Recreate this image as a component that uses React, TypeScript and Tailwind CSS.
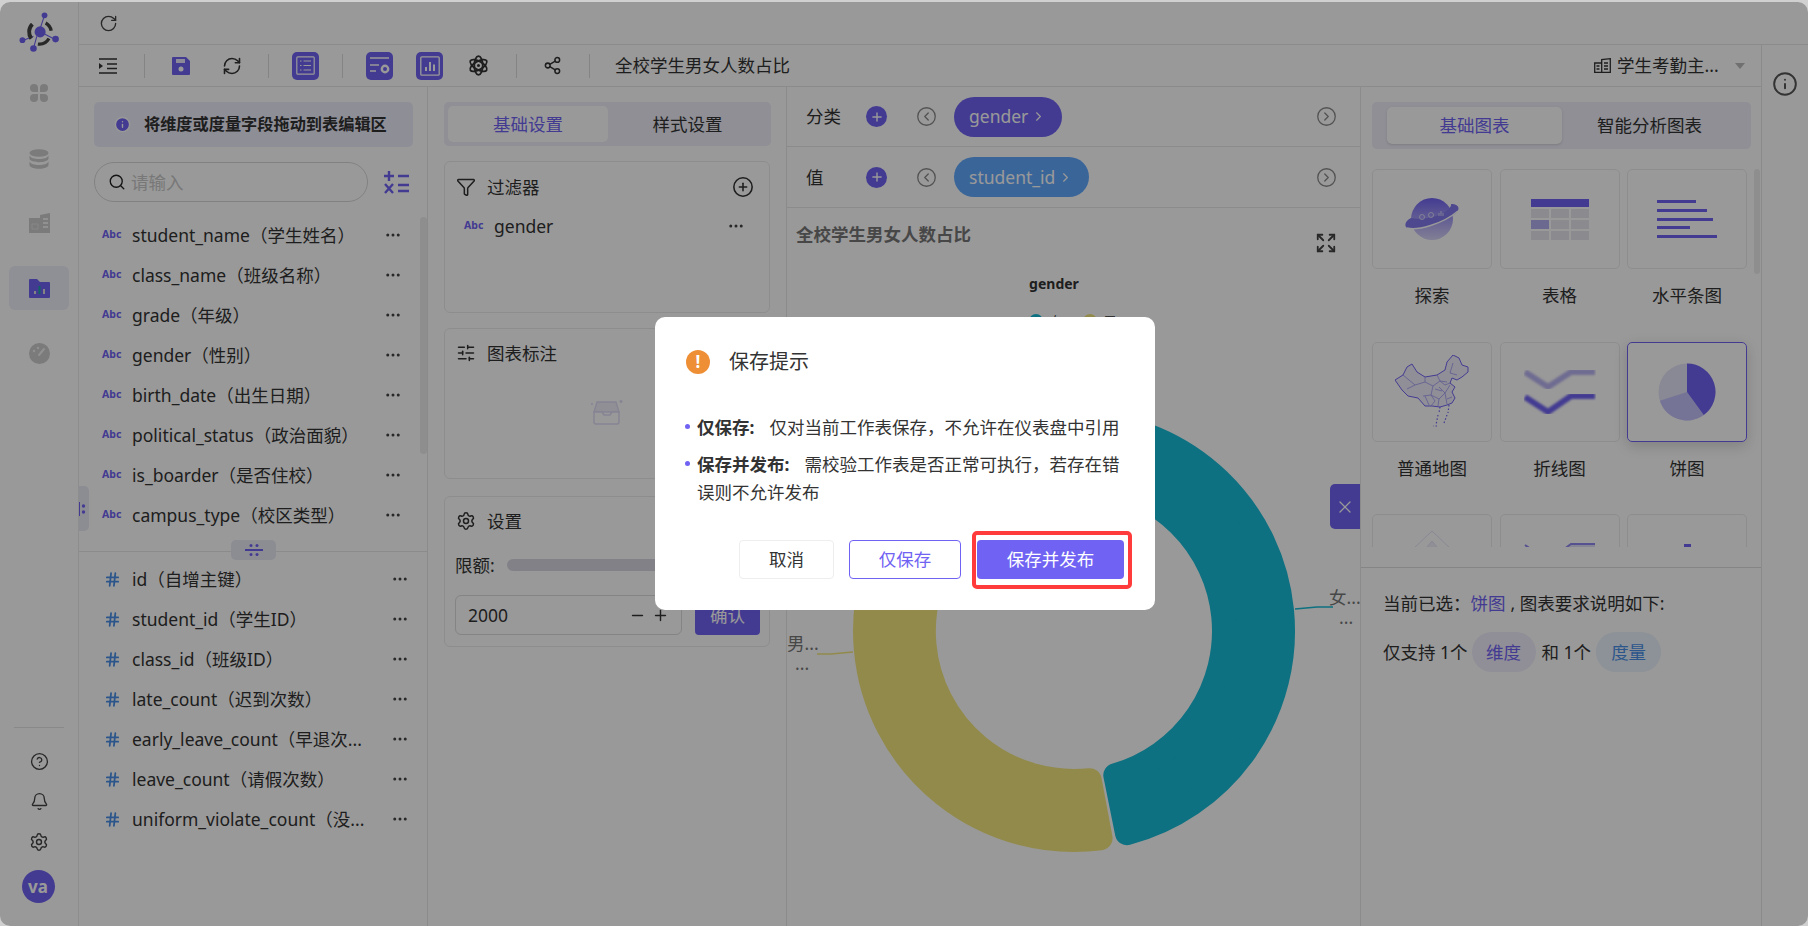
import {
  Bell,
  CircleChevronLeft,
  CircleChevronRight,
  CircleHelp,
  CirclePlus,
  ChevronRight,
  Ellipsis,
  Expand,
  Funnel,
  Hash,
  Info,
  Minus,
  Plus,
  RefreshCw,
  RotateCw,
  Search,
  Settings,
  Share2,
  SlidersHorizontal,
  X,
} from "lucide-react";

const dimensions = [
  "student_name（学生姓名）",
  "class_name（班级名称）",
  "grade（年级）",
  "gender（性别）",
  "birth_date（出生日期）",
  "political_status（政治面貌）",
  "is_boarder（是否住校）",
  "campus_type（校区类型）",
];

const measures = [
  "id（自增主键）",
  "student_id（学生ID）",
  "class_id（班级ID）",
  "late_count（迟到次数）",
  "early_leave_count（早退次...",
  "leave_count（请假次数）",
  "uniform_violate_count（没...",
];

function sector(a0: number, a1: number, rO: number, rI: number, d: number) {
  const pt = (deg: number, r: number) => {
    const rad = (deg * Math.PI) / 180;
    return `${(287 + r * Math.sin(rad)).toFixed(2)} ${(423 - r * Math.cos(rad)).toFixed(2)}`;
  };
  const off = (r: number) => ((d / r) * 180) / Math.PI;
  const large = a1 - a0 > 180 ? 1 : 0;
  return `M${pt(a0 + off(rO), rO)} A${rO} ${rO} 0 ${large} 1 ${pt(a1 - off(rO), rO)} L${pt(a1 - off(rI), rI)} A${rI} ${rI} 0 ${large} 0 ${pt(a0 + off(rI), rI)} Z`;
}

function Sep() {
  return <div className="h-[24px] w-px bg-[#dcdcdc]" />;
}

function Abc() {
  return <span className="mt-[-2px] w-[30px] shrink-0 text-[10.500px] leading-none font-bold text-[#7063f3]">Abc</span>;
}

function Logo() {
  return (
    <svg width="42" height="42" viewBox="0 0 38 38">
      <path d="M24 3 L20 15 M4 26 L14 22 M14 33 L17 22 M34 25 L24 20" stroke="#7063f3" strokeWidth="1" />
      <path d="M12 24 A10 10 0 0 1 13 11" fill="none" stroke="#444" strokeWidth="3.5" />
      <path d="M25 10 A10 10 0 0 1 30 17" fill="none" stroke="#444" strokeWidth="3" />
      <path d="M18 29 A10 10 0 0 0 28 24" fill="none" stroke="#444" strokeWidth="3" />
      <circle cx="20" cy="18" r="5" fill="#7063f3" />
      <circle cx="24" cy="3" r="2.6" fill="#7063f3" />
      <circle cx="4" cy="25.5" r="2.6" fill="#7063f3" />
      <circle cx="14" cy="33" r="3" fill="#7063f3" />
      <circle cx="34" cy="24.5" r="3" fill="#7063f3" />
    </svg>
  );
}

function Petals() {
  return (
    <svg width="20" height="20" viewBox="0 0 20 20" fill="#cdcdcd">
      <path d="M9 9H5a4 4 0 1 1 4-4z" />
      <path d="M11 9h4a4 4 0 1 0-4-4z" />
      <path d="M9 11H5a4 4 0 1 0 4 4z" />
      <path d="M11 11h4a4 4 0 1 1-4 4z" />
    </svg>
  );
}

function Db() {
  return (
    <svg width="20" height="20" viewBox="0 0 20 20" fill="#cdcdcd">
      <ellipse cx="10" cy="4" rx="9.5" ry="3.8" />
      <path d="M.5 6.5c1 2.5 5 3.5 9.5 3.5s8.500-1 9.500-3.500V9.500c0 2-4 3.700-9.500 3.700S.5 11.500.5 9.500z" />
      <path d="M.5 12.500c1 2.500 5 3.500 9.500 3.500s8.500-1 9.500-3.500V16c0 2-4 3.800-9.500 3.800S.5 18 .5 16z" />
    </svg>
  );
}

function Building() {
  return (
    <svg width="21" height="20" viewBox="0 0 21 20">
      <path d="M0 5h11V2l10-2v20H0z" fill="#cdcdcd" />
      <path d="M3 11h6v5H3z" fill="none" stroke="#e2e2e2" strokeWidth="1" />
      <path d="M14 6h5M14 10h5M14 14h5" fill="none" stroke="#f2f2f2" strokeWidth="2" />
    </svg>
  );
}

function FolderChart() {
  return (
    <svg width="21" height="19" viewBox="0 0 21 19">
      <path d="M0 1a1 1 0 0 1 1-1h7l3 3h9a1 1 0 0 1 1 1v14a1 1 0 0 1-1 1H1a1 1 0 0 1-1-1z" fill="#7063f3" />
      <path d="M5 12h2v3H5z" fill="#ddd" />
      <path d="M9.500 7h2v8h-2z" fill="#1aa6a6" />
      <path d="M14 10h2v5h-2z" fill="#ddd" />
    </svg>
  );
}

function Gauge() {
  return (
    <svg width="21" height="21" viewBox="0 0 21 21">
      <circle cx="10.500" cy="10.500" r="10.500" fill="#cdcdcd" />
      <path d="M10 12l5-6" stroke="#f2f2f2" strokeWidth="2" strokeLinecap="round" />
      <circle cx="5" cy="8" r="1.200" fill="#f2f2f2" />
      <circle cx="9" cy="5" r="1.200" fill="#f2f2f2" />
    </svg>
  );
}

function AtomIcon() {
  return (
    <svg width="21" height="21" viewBox="0 0 21 21" fill="none" stroke="#333" strokeWidth="1.800">
      <ellipse cx="10.500" cy="10.500" rx="4.200" ry="9.400" />
      <ellipse cx="10.500" cy="10.500" rx="4.200" ry="9.400" transform="rotate(60 10.500 10.500)" />
      <ellipse cx="10.500" cy="10.500" rx="4.200" ry="9.400" transform="rotate(120 10.500 10.500)" />
      <circle cx="10.500" cy="10.500" r="1.500" fill="#333" stroke="none" />
    </svg>
  );
}

function TileList() {
  return (
    <svg width="19" height="19" viewBox="0 0 19 19" fill="none" stroke="#fff" strokeWidth="1.200">
      <rect x=".8" y=".8" width="17.400" height="17.400" rx="1" />
      <path d="M4 5h1.500M7.500 5H15M4 9.500h1.500M7.500 9.500H15M4 14h1.500M7.500 14H15" />
    </svg>
  );
}

function TileSettings() {
  return (
    <svg width="22" height="20" viewBox="0 0 22 20" fill="none" stroke="#fff" strokeWidth="1.600">
      <path d="M1 2h19M1 9h9M1 15h6" />
      <circle cx="16" cy="13" r="3.200" strokeWidth="2.400" />
    </svg>
  );
}

function TileChart() {
  return (
    <svg width="20" height="20" viewBox="0 0 20 20" fill="none" stroke="#fff" strokeWidth="1.300">
      <rect x=".8" y=".8" width="18.400" height="18.400" rx="1" />
      <path d="M6 15v-4M10 15V6M14 15V8.500" strokeWidth="2" />
    </svg>
  );
}

function MathIcon() {
  return (
    <svg width="25" height="24" viewBox="0 0 25 24" fill="none" stroke="#7063f3" strokeWidth="2.400">
      <path d="M0 6h10M5 1v10M14 6h11M1 14l8 9M9 14l-8 9M14 15h11M14 21h11" />
    </svg>
  );
}

function Inbox() {
  return (
    <svg width="32" height="27" viewBox="0 0 32 27" fill="none" stroke="#dedcf6" strokeWidth="1.400">
      <path d="M6 3h19l3 10H3z" fill="#f0effb" />
      <path d="M3 13h8l2 3h6l2-3h7v10a2 2 0 0 1-2 2H5a2 2 0 0 1-2-2z" fill="#fff" />
      <path d="M30 1v3M28.500 2.500h3M0 5h2" />
    </svg>
  );
}

function Planet() {
  return (
    <svg width="54" height="42" viewBox="0 0 54 42">
      <defs>
        <linearGradient id="planet" x1="0" y1="0" x2="0" y2="1">
          <stop offset="0" stopColor="#7063f3" />
          <stop offset="1" stopColor="#d8d5f8" />
        </linearGradient>
      </defs>
      <circle cx="27" cy="21" r="21" fill="url(#planet)" />
      <path d="M6 20 C-2 24 -1 31 6 31 C20 31 40 24 50 16 C56 11 54 6 46 6 C48 12 26 24 6 20Z" fill="#8379ee" />
      <path d="M2 30 C12 33 38 26 53 13" fill="none" stroke="#fff" strokeWidth="1.500" />
      <g fill="none" stroke="#e8e6fb" strokeWidth=".8">
        <circle cx="17" cy="19" r="2.500" />
        <circle cx="26" cy="17" r="2.500" />
        <path d="M34 18v-3M36 18v-5M38 18v-3" />
      </g>
    </svg>
  );
}

function TableIcon() {
  const cells = [0, 1, 2, 3, 4, 5, 6, 7, 8];
  return (
    <div className="flex w-[58px] flex-col gap-[2px]">
      <div className="h-[8px] bg-[#7063f3]" />
      <div className="grid grid-cols-3 gap-[2px]">
        {cells.map((c) => (
          <div key={c} className={c === 3 ? "h-[9px] bg-[#b5b0f0]" : "h-[9px] bg-[#e6e6ee]"} />
        ))}
      </div>
    </div>
  );
}

function BarsIcon() {
  return (
    <div className="flex w-[60px] flex-col gap-[5.600px]">
      <div className="h-[3px] w-[39px] bg-[#7063f3]" />
      <div className="h-[3px] w-[50px] bg-[#7063f3]" />
      <div className="h-[3px] w-[56px] bg-[#7063f3]" />
      <div className="h-[3px] w-[33px] bg-[#7063f3]" />
      <div className="h-[3px] w-[60px] bg-[#7063f3]" />
    </div>
  );
}

function MapIcon() {
  return (
    <svg width="74" height="73" viewBox="0 0 74 73" fill="none" stroke="#7063f3">
      <path
        d="M58 0L64 3 67 10 73 12 73 17 67 22 62 25 57 23 55 28 60 32 57 37 60 43 57 48 52 50 45 52 37 51 30 51 23 43 13 41 7 35 0 25 8 20 12 12 17 9 22 17 30 22 42 20 50 15 52 7Z"
        fill="#f0effc"
        strokeWidth="1"
      />
      <path
        d="M20 30L30 27 38 31 36 40 28 41M38 31L45 26 52 27M36 40L44 44 50 38 55 30M44 44L43 51M30 41L34 50M50 38L52 49M58 8L55 18 62 20M8 20L20 30 12 34M30 27L30 22M42 20L45 26 50 30 55 28M36 40L40 46 36 51M44 32L50 38M40 34L47 36M52 44L57 42"
        stroke="#9d97f2"
        strokeWidth=".8"
      />
      <path d="M45 52L44 58M54 50L53 58M43 60L41 70M52 60L49 68M42 71h-4" strokeWidth="1.200" strokeDasharray="1.500 2" />
    </svg>
  );
}

function LineIcon() {
  return (
    <svg width="72" height="46" viewBox="0 0 72 46" fill="none">
      <defs>
        <filter id="soft">
          <feGaussianBlur stdDeviation=".8" />
        </filter>
      </defs>
      <path d="M1 3L24 18 47 3H71" stroke="#b9b4f3" strokeWidth="6" filter="url(#soft)" />
      <path d="M1 28L24 43 47 27H71" stroke="#7063f3" strokeWidth="6" filter="url(#soft)" />
    </svg>
  );
}

function PieIcon() {
  return (
    <svg width="58" height="58" viewBox="0 0 58 58">
      <circle cx="29" cy="29" r="28.500" fill="#e4e3f8" />
      <path d="M29 29L45.750 52.060A28.500 28.500 0 0 1 1.900 37.800Z" fill="#c3c1fb" />
      <path d="M29 .5A28.500 28.500 0 0 1 45.750 52.060L29 29Z" fill="#7063f3" />
    </svg>
  );
}

const charts = [
  { id: "explore", name: "探索", icon: <Planet /> },
  { id: "table", name: "表格", icon: <TableIcon /> },
  { id: "hbar", name: "水平条图", icon: <BarsIcon /> },
  { id: "map", name: "普通地图", icon: <MapIcon /> },
  { id: "line", name: "折线图", icon: <LineIcon /> },
  { id: "pie", name: "饼图", icon: <PieIcon />, active: true },
  {
    id: "radar",
    icon: (
      <svg width="50" height="68" viewBox="0 0 50 68" fill="none" stroke="#e4e2f6">
        <path d="M25 1L45 20 37 44H13L5 20Z" />
        <path d="M25 11L36 24 25 38 14 24Z" fill="#f0effb" />
      </svg>
    ),
  },
  {
    id: "area",
    icon: (
      <svg width="72" height="46" viewBox="0 0 72 46" fill="none">
        <path d="M1 4L24 20 47 3H71V30H1Z" fill="#e0defa" />
        <path d="M1 4L24 20 47 3H71" stroke="#9088ee" strokeWidth="2" />
      </svg>
    ),
  },
  {
    id: "bar",
    icon: (
      <div className="flex h-[40px] items-start justify-center">
        <div className="h-[30px] w-[7px] bg-[#7063f3]" />
      </div>
    ),
  },
];

export default function App() {
  return (
    <div className="relative h-screen w-screen overflow-hidden bg-[#d0d0d0] pt-[2px] font-['Noto_Sans','Noto_Sans_CJK_SC',sans-serif] text-[17.5px] text-[#333]">
      <div className="relative flex h-full overflow-hidden rounded-[10px] bg-white">
        {/* rail */}
        <aside className="flex w-[79px] shrink-0 flex-col items-center border-r border-[#ececec]">
          <div className="mt-[11px] flex h-[40px] items-center justify-center">
            <Logo />
          </div>
          <div className="mt-[30px] flex h-[20px] items-center"><Petals /></div>
          <div className="mt-[46px] flex h-[20px] items-center"><Db /></div>
          <div className="mt-[44px] flex h-[20px] items-center"><Building /></div>
          <div className="mt-[33px] flex h-[44px] w-[60px] items-center justify-center rounded-[6px] bg-[#eeeefb]">
            <FolderChart />
          </div>
          <div className="mt-[33px] flex h-[21px] items-center"><Gauge /></div>
          <div className="mt-auto w-[50px] border-t border-[#e4e4e4]" />
          <CircleHelp size={19} strokeWidth={1.700} className="mt-[24px] text-[#444]" />
          <Bell size={19} strokeWidth={1.700} className="mt-[21px] text-[#444]" />
          <Settings size={20} strokeWidth={1.700} className="mt-[21px] text-[#444]" />
          <div className="mt-[18px] mb-[23px] flex h-[33px] w-[33px] -translate-x-px items-center justify-center rounded-full bg-[#7063f3] text-[17px] leading-none font-bold text-white">
            va
          </div>
        </aside>

        <div className="flex min-w-0 flex-1 flex-col">
          <div className="flex h-[43px] shrink-0 items-center border-b border-[#e8e8e8] pl-[20px]">
            <RotateCw size={19} strokeWidth={1.700} className="text-[#444]" />
          </div>

          <div className="flex min-h-0 flex-1">
            <div className="flex w-[1682px] flex-col">
              {/* toolbar */}
              <div className="flex h-[42px] shrink-0 items-center border-b border-[#e8e8e8] pl-[20px]">
                <svg width="18" height="16" viewBox="0 0 18 16" stroke="#333" strokeWidth="1.700">
                  <path d="M0 1h18M8 6h10M8 10.500h10M0 15h18" />
                  <path d="M0 5l4 3-4 3z" fill="#333" stroke="none" />
                </svg>
                <div className="ml-[27px]"><Sep /></div>
                <svg className="ml-[27px]" width="18" height="18" viewBox="0 0 18 18">
                  <path d="M1 0h13l4 4v13a1 1 0 0 1-1 1H1a1 1 0 0 1-1-1V1a1 1 0 0 1 1-1z" fill="#7063f3" />
                  <rect x="4" y="2" width="9" height="4" fill="#e8e6fb" />
                  <circle cx="9" cy="12" r="2.500" fill="#fff" />
                </svg>
                <RefreshCw size={20} strokeWidth={1.900} className="ml-[32px] text-[#333]" />
                <div className="ml-[26px]"><Sep /></div>
                <div className="ml-[23px] flex h-[28px] w-[27px] items-center justify-center rounded-[5px] bg-[#7063f3]"><TileList /></div>
                <div className="ml-[23px]"><Sep /></div>
                <div className="ml-[23px] flex h-[28px] w-[27px] items-center justify-center rounded-[5px] bg-[#7063f3]"><TileSettings /></div>
                <div className="ml-[23px] flex h-[28px] w-[27px] items-center justify-center rounded-[5px] bg-[#7063f3]"><TileChart /></div>
                <div className="ml-[25px]"><AtomIcon /></div>
                <div className="ml-[27px]"><Sep /></div>
                <Share2 size={19} strokeWidth={1.900} className="ml-[26px] text-[#333]" />
                <div className="ml-[27px]"><Sep /></div>
                <span className="ml-[25px]">全校学生男女人数占比</span>
                <div className="ml-auto flex items-center pr-[16px]">
                  <svg width="17" height="15" viewBox="0 0 17 15" fill="none" stroke="#333" strokeWidth="1.300">
                    <path d="M.7 5h7v9.300h-7zM7.700 14.300V1.700l8.600-1v13.600zM2.500 8h3M2.500 11h3M10 5h4M10 8h4M10 11h4" />
                  </svg>
                  <span className="ml-[6px] w-[103px]">学生考勤主...</span>
                  <span className="ml-[15px] h-0 w-0 border-x-[5px] border-t-[6px] border-x-transparent border-t-[#bbb]" />
                </div>
              </div>

              <div className="flex min-h-0 flex-1">
                {/* fields */}
                <section className="relative flex w-[349px] shrink-0 flex-col border-r border-[#e8e8e8]">
                  <div className="mx-[15px] mt-[15px] flex h-[45px] w-[319px] items-center rounded-[5px] bg-[#ededfb] pl-[20px]">
                    <Info size={17} fill="#7063f3" stroke="#fff" strokeWidth={2} />
                    <span className="ml-[13px] text-[16.200px] font-semibold">将维度或度量字段拖动到表编辑区</span>
                  </div>
                  <div className="mx-[15px] mt-[15px] flex items-center">
                    <div className="flex h-[40px] w-[274px] items-center rounded-full border border-[#d8d8d8] pl-[13px]">
                      <Search size={18} strokeWidth={1.800} className="text-[#222]" />
                      <span className="ml-[5px] text-[#c8c8c8]">请输入</span>
                    </div>
                    <div className="ml-[16px]"><MathIcon /></div>
                  </div>
                  <div className="mt-[13px] flex flex-col">
                    {dimensions.map((d) => (
                      <div key={d} className="flex h-[40px] items-center pr-[25px] pl-[23px]">
                        <Abc />
                        <span className="flex-1 truncate">{d}</span>
                        <Ellipsis size={18} strokeWidth={2} className="text-[#444]" />
                      </div>
                    ))}
                  </div>
                  <div className="mt-[16px] border-t border-[#e8e8e8]" />
                  <div className="mt-[7px] flex flex-col">
                    {measures.map((m) => (
                      <div key={m} className="flex h-[40px] items-center pr-[18px] pl-[25px]">
                        <Hash size={17} strokeWidth={2.500} className="mr-[11px] shrink-0 text-[#4a90e8]" />
                        <span className="flex-1 truncate">{m}</span>
                        <Ellipsis size={18} strokeWidth={2} className="text-[#444]" />
                      </div>
                    ))}
                  </div>
                  <div className="absolute top-[130px] right-0 h-[237px] w-[7px] rounded-full bg-[#ededed]" />
                  <div className="absolute top-[453px] left-[152px] flex h-[20px] w-[45px] items-center justify-center rounded-[5px] bg-[#e9e9f6]">
                    <svg width="18" height="12" viewBox="0 0 18 12" fill="#7063f3">
                      <rect x="0" y="5" width="18" height="2" />
                      <circle cx="6" cy="1.500" r="1.500" />
                      <circle cx="12" cy="1.500" r="1.500" />
                      <circle cx="6" cy="10.500" r="1.500" />
                      <circle cx="12" cy="10.500" r="1.500" />
                    </svg>
                  </div>
                  <div className="absolute top-[399px] left-0 flex h-[45px] w-[10px] items-center rounded-r-[5px] bg-[#e9e9f6]">
                    <svg width="7" height="14" viewBox="0 0 7 14" fill="#7063f3">
                      <rect x="0" y="0" width="1" height="14" />
                      <circle cx="4.500" cy="4" r="1.700" />
                      <circle cx="4.500" cy="10" r="1.700" />
                    </svg>
                  </div>
                </section>

                {/* settings */}
                <section className="flex w-[359px] shrink-0 flex-col border-r border-[#e8e8e8] px-[16px]">
                  <div className="mt-[15px] flex h-[44px] w-[327px] items-center rounded-[5px] bg-[#eeeef8] p-[4px]">
                    <div className="flex h-[36px] w-[160px] items-center justify-center rounded-[5px] bg-white text-[#7063f3]">基础设置</div>
                    <div className="flex flex-1 items-center justify-center">样式设置</div>
                  </div>

                  <div className="mt-[15px] h-[152px] w-[326px] rounded-[6px] border border-[#ececec]">
                    <div className="flex items-center pt-[14px] pr-[15px] pl-[11px]">
                      <Funnel size={20} strokeWidth={1.800} className="text-[#333]" />
                      <span className="ml-[11px] leading-[22px]">过滤器</span>
                      <CirclePlus size={22} strokeWidth={1.700} className="ml-auto text-[#333]" />
                    </div>
                    <div className="mt-[17px] flex items-center pr-[24px] pl-[19px]">
                      <Abc />
                      <span className="flex-1 leading-[22px]">gender</span>
                      <Ellipsis size={18} strokeWidth={2} className="text-[#444]" />
                    </div>
                  </div>

                  <div className="mt-[15px] h-[151px] w-[326px] rounded-[6px] border border-[#ececec]">
                    <div className="flex items-center pt-[13px] pl-[11px]">
                      <SlidersHorizontal size={20} strokeWidth={1.800} className="text-[#333]" />
                      <span className="ml-[11px] leading-[22px]">图表标注</span>
                    </div>
                    <div className="mt-[35px] flex justify-center">
                      <Inbox />
                    </div>
                  </div>

                  <div className="mt-[17px] h-[151px] w-[326px] rounded-[6px] border border-[#ececec] pl-[10px]">
                    <div className="flex items-center pt-[13px] pl-[1px]">
                      <Settings size={20} strokeWidth={1.800} className="text-[#333]" />
                      <span className="ml-[11px] leading-[22px]">设置</span>
                    </div>
                    <div className="mt-[22px] flex items-center">
                      <span className="w-[52px] leading-[22px]">限额:</span>
                      <div className="h-[12px] w-[253px] rounded-full bg-[#d8d8e2]" />
                    </div>
                    <div className="mt-[19px] flex items-center">
                      <div className="flex h-[40px] w-[227px] items-center rounded-[6px] border border-[#dcdcdc] pl-[12px]">
                        <span className="flex-1">2000</span>
                        <Minus size={17} className="mr-[6px] text-[#333]" />
                        <Plus size={17} className="mr-[12px] text-[#333]" />
                      </div>
                      <div className="ml-[13px] flex h-[40px] w-[65px] items-center justify-center rounded-[4px] bg-[#7063f3] text-white">确认</div>
                    </div>
                  </div>
                </section>

                {/* chart */}
                <section className="flex w-[574px] shrink-0 flex-col border-r border-[#e8e8e8]">
                  <div className="flex h-[60px] shrink-0 items-center border-b border-[#e8e8e8] pr-[23px] pl-[19px]">
                    <span className="w-[60px]">分类</span>
                    <div className="flex h-[21px] w-[21px] items-center justify-center rounded-full bg-[#7063f3]">
                      <Plus size={14} strokeWidth={2.400} className="text-white" />
                    </div>
                    <CircleChevronLeft size={21} strokeWidth={1.500} className="ml-[29px] text-[#8a8a8a]" />
                    <div className="ml-[17px] flex h-[40px] items-center rounded-full bg-[#7063f3] pr-[16px] pl-[15px] text-[#fff]">
                      gender
                      <ChevronRight size={15} strokeWidth={1.800} className="ml-[3px]" />
                    </div>
                    <CircleChevronRight size={21} strokeWidth={1.500} className="ml-auto text-[#8a8a8a]" />
                  </div>
                  <div className="flex h-[61px] shrink-0 items-center border-b border-[#e8e8e8] pr-[23px] pl-[19px]">
                    <span className="w-[60px]">值</span>
                    <div className="flex h-[21px] w-[21px] items-center justify-center rounded-full bg-[#7063f3]">
                      <Plus size={14} strokeWidth={2.400} className="text-white" />
                    </div>
                    <CircleChevronLeft size={21} strokeWidth={1.500} className="ml-[29px] text-[#8a8a8a]" />
                    <div className="ml-[17px] flex h-[40px] items-center rounded-full bg-[#61a9ff] pr-[16px] pl-[15px] text-white">
                      student_id
                      <ChevronRight size={15} strokeWidth={1.800} className="ml-[3px]" />
                    </div>
                    <CircleChevronRight size={21} strokeWidth={1.500} className="ml-auto text-[#8a8a8a]" />
                  </div>
                  <div className="relative min-h-0 flex-1">
                    <svg width="573" height="718" viewBox="0 0 573 718" className="absolute inset-0">
                      <text x="267" y="81" textAnchor="middle" fontSize="14" fontWeight="700" fill="#333">gender</text>
                      <circle cx="249" cy="113" r="7" fill="#17bcd7" />
                      <text x="262" y="119" fontSize="14" fill="#555">女</text>
                      <circle cx="303" cy="113" r="7" fill="#f4e77e" />
                      <text x="316" y="119" fontSize="14" fill="#555">男</text>
                      <path d={sector(0, 168.600, 209, 150, 12)} fill="#17bcd7" stroke="#17bcd7" strokeWidth="24" strokeLinejoin="round" />
                      <path d={sector(169.400, 360, 209, 150, 12)} fill="#f4e77e" stroke="#f4e77e" strokeWidth="24" strokeLinejoin="round" />
                      <path d="M508 401L530 399H546" fill="none" stroke="#17bcd7" strokeWidth="1.500" />
                      <path d="M66 444L44 446H30" fill="none" stroke="#f4e77e" strokeWidth="1.500" />
                      <text x="542" y="396" fontSize="17.500" fill="#777">女...</text>
                      <text x="552" y="416" fontSize="17.500" fill="#777">...</text>
                      <text x="0" y="442" fontSize="17.500" fill="#777">男...</text>
                      <text x="8" y="462" fontSize="17.500" fill="#777">...</text>
                    </svg>
                    <div className="relative flex items-start justify-between pt-[13px] pr-[23px] pl-[9px]">
                      <span className="font-bold text-[#777]">全校学生男女人数占比</span>
                      <Expand size={22} strokeWidth={2} className="mt-[11px] text-[#444]" />
                    </div>
                    <div className="absolute top-[276px] right-0 flex h-[45px] w-[30px] items-center justify-center rounded-l-[5px] bg-[#7063f3]">
                      <X size={20} strokeWidth={1.500} className="text-white" />
                    </div>
                  </div>
                </section>

                {/* chart types */}
                <section className="relative flex w-[400px] shrink-0 flex-col">
                  <div className="mx-[11px] mt-[15px] flex h-[47px] w-[379px] items-center rounded-[5px] bg-[#eeeef8] pr-[14px] pl-[15px]">
                    <div className="flex h-[37px] w-[175px] items-center justify-center rounded-[5px] bg-white text-[#7063f3] shadow-sm">基础图表</div>
                    <div className="flex flex-1 items-center justify-center">智能分析图表</div>
                  </div>
                  <div className="mt-[20px] ml-[11px] grid h-[378px] grid-cols-[120px_120px_120px] gap-x-[7.500px] overflow-hidden">
                    {charts.map((c) => (
                      <div key={c.id} className="h-[172.500px]">
                        <div
                          className={
                            c.active
                              ? "flex h-[100px] items-center justify-center overflow-hidden rounded-[5px] border border-[#7063f3] shadow-[0_4px_14px_rgba(0,0,0,0.16)]"
                              : "flex h-[100px] items-center justify-center overflow-hidden rounded-[5px] border border-[#ececec]"
                          }
                        >
                          {c.icon}
                        </div>
                        {c.name && <div className="mt-[14px] text-center leading-[24px]">{c.name}</div>}
                      </div>
                    ))}
                  </div>
                  <div className="absolute top-[82px] right-[1px] h-[105px] w-[6px] rounded-full bg-[#ededed]" />
                  <div className="mt-[20px] border-t border-[#dedede] pt-[23px] pl-[22px]">
                    <div className="flex items-center leading-[24px]">
                      当前已选：<span className="text-[#7063f3]">饼图</span>
                      <span className="ml-[5px]">, 图表要求说明如下:</span>
                    </div>
                    <div className="mt-[17px] flex items-center">
                      <span>仅支持 1个</span>
                      <span className="ml-[4px] flex h-[40px] w-[64px] items-center justify-center rounded-full bg-[#f0eefc] text-[#7063f3]">维度</span>
                      <span className="ml-[6px]">和 1个</span>
                      <span className="ml-[5px] flex h-[40px] w-[65px] items-center justify-center rounded-full bg-[#e9f3fd] text-[#4a90e8]">度量</span>
                    </div>
                  </div>
                </section>
              </div>
            </div>

            <div className="flex flex-1 justify-center border-l border-[#e8e8e8] pt-[26px]">
              <Info size={26} strokeWidth={1.800} className="text-[#555]" />
            </div>
          </div>
        </div>

        {/* mask + dialog */}
        <div className="absolute inset-0 flex items-center justify-center bg-black/40 pb-[2px] pl-[2px]">
          <div className="relative h-[293px] w-[500px] rounded-[10px] bg-white px-[31px] pt-[32px]">
            <div className="flex items-center">
              <div className="flex h-[24px] w-[24px] items-center justify-center rounded-full bg-[#ee8f36] text-[17px] leading-none font-bold text-white">!</div>
              <span className="ml-[19px] text-[20px] leading-[26px]">保存提示</span>
            </div>
            <ul className="mt-[38px] -ml-px flex flex-col gap-[9px] leading-[28px]">
              <li className="flex">
                <span className="mt-[11px] mr-[7px] h-[5px] w-[5px] shrink-0 rounded-full bg-[#7063f3]" />
                <span>
                  <b className="mr-[15px] font-bold">仅保存:</b>仅对当前工作表保存，不允许在仪表盘中引用
                </span>
              </li>
              <li className="flex">
                <span className="mt-[11px] mr-[7px] h-[5px] w-[5px] shrink-0 rounded-full bg-[#7063f3]" />
                <span>
                  <b className="mr-[15px] font-bold">保存并发布:</b>需校验工作表是否正常可执行，若存在错误则不允许发布
                </span>
              </li>
            </ul>
            <div className="absolute right-[31px] bottom-[31px] flex items-center">
              <button className="h-[39px] w-[95px] rounded-[4px] border border-[#eee] bg-white">取消</button>
              <button className="ml-[15px] h-[39px] w-[112px] rounded-[4px] border border-[#7063f3] bg-white text-[#7063f3]">仅保存</button>
              <button className="ml-[16px] h-[39px] w-[147px] rounded-[4px] bg-[#7063f3] text-white">保存并发布</button>
            </div>
            <div className="absolute top-[214px] left-[317px] h-[58px] w-[160px] rounded-[5px] border-[4px] border-[#ff3b3b]" />
          </div>
        </div>
      </div>
    </div>
  );
}
